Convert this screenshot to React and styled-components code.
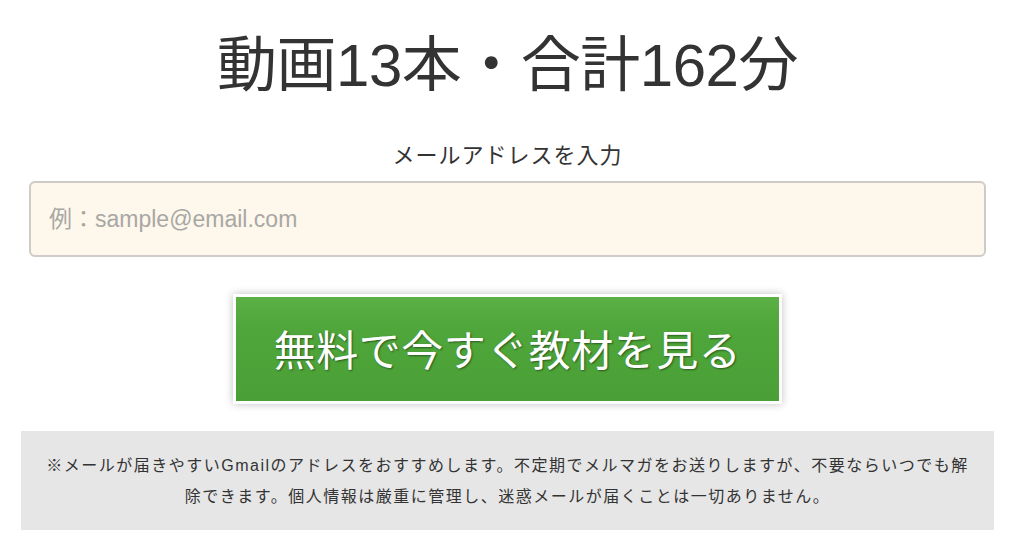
import styled, { createGlobalStyle } from "styled-components";

const Global = createGlobalStyle`
  html, body {
    margin: 0;
    padding: 0;
    background: #fff;
  }
  body {
    font-family: "Liberation Sans", "Noto Sans CJK JP", sans-serif;
    color: #333;
  }
`;

const Page = styled.div`
  width: 973px;
  margin-left: 21px;
  display: flex;
  flex-direction: column;
  align-items: center;
`;

const Title = styled.h1`
  margin: 31px 0 0;
  font-size: 60px;
  font-weight: 400;
  line-height: 70px;
  color: #333;
  letter-spacing: -0.5px;
`;

const Label = styled.div`
  margin-top: 41px;
  font-size: 22px;
  line-height: 28px;
  letter-spacing: 1px;
  color: #333;
`;

const Input = styled.input`
  box-sizing: border-box;
  margin-top: 11px;
  width: 957px;
  height: 76px;
  padding: 0 18px;
  border: 2px solid #cfcbc6;
  border-radius: 6px;
  background: #fdf7ec;
  font-family: "Liberation Sans", "Noto Sans CJK JP", sans-serif;
  font-size: 23px;
  color: #333;
  outline: none;
  &::placeholder {
    color: #a9a7a4;
  }
`;

const Button = styled.button`
  box-sizing: border-box;
  margin-top: 37px;
  width: 549px;
  height: 110px;
  padding-bottom: 4px;
  border: 3px solid #fff;
  background: linear-gradient(#5bb046, #4fa63a 30%, #4aa036);
  box-shadow: 0 0 8px rgba(0, 0, 0, 0.25);
  color: #fff;
  font-family: "Noto Sans CJK JP", sans-serif;
  font-size: 42px;
  font-weight: 400;
  letter-spacing: 0.5px;
  text-shadow: 1px 1px 2px rgba(0, 0, 0, 0.45);
  cursor: pointer;
`;

const Note = styled.div`
  box-sizing: border-box;
  margin-top: 27px;
  width: 973px;
  height: 99px;
  padding: 19px 22px 0;
  background: #e6e6e6;
  font-family: "Liberation Sans", "Noto Sans CJK JP", sans-serif;
  font-size: 16px;
  line-height: 31px;
  letter-spacing: 1.5px;
  text-align: center;
  color: #333;
`;

export default function App() {
  return (
    <>
      <Global />
      <Page>
        <Title>動画13本・合計162分</Title>
        <Label>メールアドレスを入力</Label>
        <Input type="email" placeholder="例：sample@email.com" />
        <Button>無料で今すぐ教材を見る</Button>
        <Note>
          ※メールが届きやすいGmailのアドレスをおすすめします。不定期でメルマガをお送りしますが、不要ならいつでも解除できます。個人情報は厳重に管理し、迷惑メールが届くことは一切ありません。
        </Note>
      </Page>
    </>
  );
}
